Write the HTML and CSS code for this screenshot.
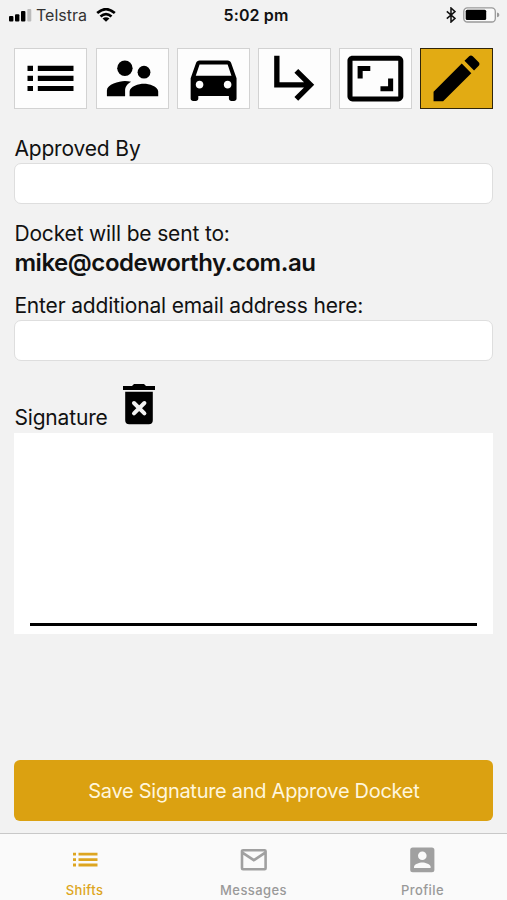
FILE: index.html
```html
<!DOCTYPE html>
<html lang="en">
<head>
<meta charset="utf-8">
<title>Docket approval</title>
<link rel="stylesheet" href="styles.css">
</head>
<body>
<div class="screen">
  <header class="status">
    <div class="status-left">
      <svg class="signal" width="23" height="14" viewBox="0 0 23 14"><rect x="0" y="8" width="4.4" height="5.5" rx="1"/><rect x="6" y="6.3" width="4.4" height="7.2" rx="1"/><rect x="12" y="3" width="4.4" height="10.5" rx="1"/><rect class="faint" x="18.3" y="1" width="4" height="12.5" rx="1"/></svg>
      <span class="carrier">Telstra</span>
      <svg class="wifi" width="20" height="14" viewBox="0 0 20 14"><path d="M1.2 5.1Q10-2.7 18.8 5.1M4.5 8.5Q10 3.8 15.5 8.5"/><path class="dot" d="M6.5 10.6Q10 7.8 13.5 10.6L10 13.8z"/></svg>
    </div>
    <div class="clock">5:02 pm</div>
    <div class="status-right">
      <svg width="10" height="16" viewBox="0 0 10 16"><path class="bluetooth" d="M.8 4.4 9 11.4 5 15V1l4 3.6-8.2 7"/></svg>
      <svg width="37" height="16" viewBox="0 0 37 16"><rect class="cell" x=".8" y=".8" width="31.5" height="14.2" rx="3.6"/><rect x="2.7" y="2.8" width="20.5" height="10.3" rx="1.5"/><path class="cap" d="M34 5.6q2.4.3 2.4 2.4T34 10.3z"/></svg>
    </div>
  </header>

  <main class="content">
    <nav class="tools">
      <a class="tool"><svg viewBox="14.5 48 73 61"><path d="M28 65.7h5.5v5.2H28zM38.3 65.7H74v5.2H38.3zM28 75.7h5.5v5.2H28zM38.3 75.7H74v5.2H38.3zM28 85.9h5.5v5.2H28zM38.3 85.9H74v5.2H38.3z"/></svg></a>
      <a class="tool"><svg viewBox="95.7 48 73 61"><circle cx="124.6" cy="68.2" r="7.7"/><circle cx="143.7" cy="72.2" r="6.4"/><path d="M106.6 96.3v-5.8c0-6 12-9.5 18-9.5q3 0 6.2.8c-4.5 2.6-6 5.5-6 9v5.5zM129.3 96.3v-4.8c0-5.2 9.3-7.8 14.3-7.8s14.3 2.6 14.3 7.8v4.8z"/></svg></a>
      <a class="tool"><svg viewBox="176.9 48 73 61"><path transform="translate(182.9 50.5) scale(2.55 2.53)" d="M18.92 5.01C18.72 4.42 18.16 4 17.5 4h-11c-.66 0-1.21.42-1.42 1.01L3 11v8c0 .55.45 1 1 1h1c.55 0 1-.45 1-1v-1h12v1c0 .55.45 1 1 1h1c.55 0 1-.45 1-1v-8l-2.08-5.99zM6.5 15c-.83 0-1.5-.67-1.5-1.5S5.67 12 6.5 12s1.5.67 1.5 1.5S7.33 15 6.5 15zm11 0c-.83 0-1.5-.67-1.5-1.5s.67-1.5 1.5-1.5 1.5.67 1.5 1.5-.67 1.5-1.5 1.5zM5 10l1.5-4.5h11L19 10H5z"/></svg></a>
      <a class="tool"><svg viewBox="258.1 48 73 61"><path transform="translate(263.6 45.1) scale(2.67 2.65)" d="M19 15l-6 6-1.42-1.42L15.17 16H4V4h2v10h9.17l-3.59-3.58L13 9l6 6z"/></svg></a>
      <a class="tool"><svg viewBox="339.3 48 73 61"><path transform="translate(345.2 48.1) scale(2.54)" d="M19 12h-2v3h-3v2h5v-5zM7 9h3V7H5v5h2V9zm14-6H3c-1.1 0-2 .9-2 2v14c0 1.1.9 2 2 2h18c1.1 0 2-.9 2-2V5c0-1.1-.9-2-2-2zm0 16.01H3V4.99h18v14.02z"/></svg></a>
      <a class="tool active"><svg viewBox="420.5 48 73 61"><path transform="translate(426.4 47.8) scale(2.55)" d="M3 17.25V21h3.75L17.81 9.94l-3.75-3.75L3 17.25zM20.71 7.04c.39-.39.39-1.02 0-1.41l-2.34-2.34c-.39-.39-1.02-.39-1.41 0l-1.83 1.83 3.75 3.75 1.83-1.83z"/></svg></a>
    </nav>

    <label class="label approved" for="approver"><span>Approved By</span></label>
    <input class="field" id="approver" type="text">
    <p class="label sent"><span>Docket will be sent to:</span></p>
    <p class="email"><span>mike@codeworthy.com.au</span></p>
    <label class="label extra" for="extra"><span>Enter additional email address here:</span></label>
    <input class="field" id="extra" type="text">

    <div class="signature-head">
      <span class="label signature">Signature</span>
      <svg class="trash" width="34" height="42" viewBox="0 0 34 42"><path d="M1 3h9l2-2h10l2 2h9v4H1zM3.2 8.8h27.6v28.4a4 4 0 0 1-4 4H7.2a4 4 0 0 1-4-4z"/><path class="cross" d="m12 20 10.4 10.4m0-10.4L12 30.4"/></svg>
    </div>
    <div class="pad"><div class="pad-line"></div></div>
    <button class="save"><span>Save Signature and Approve Docket</span></button>
  </main>

  <nav class="tabs">
    <a class="tab current"><svg width="28" height="28" viewBox="0 0 28 28"><path d="M2 6.8h3v2.8H2zM7.5 6.8h19v2.8h-19zM2 12.2h3V15H2zM7.5 12.2h19V15h-19zM2 17.6h3v2.8H2zM7.5 17.6h19v2.8h-19z"/></svg><span>Shifts</span></a>
    <a class="tab messages"><svg width="28" height="28" viewBox="0 0 28 28"><path class="line" d="M3 4.2h21.6a1 1 0 0 1 1 1v17a1 1 0 0 1-1 1H3a1 1 0 0 1-1-1v-17a1 1 0 0 1 1-1zM2 6.3l11.8 7.9 11.8-7.9"/></svg><span>Messages</span></a>
    <a class="tab profile"><svg width="28" height="28" viewBox="0 0 28 28"><rect x="1.2" y="1.6" width="24.2" height="24.6" rx="2.5"/><circle class="hole" cx="13.3" cy="9.8" r="4.3"/><path class="hole" d="M5 22v-1.2c0-2.8 5.4-4.4 8.3-4.4s8.3 1.6 8.3 4.4V22z"/></svg><span>Profile</span></a>
  </nav>
</div>
</body>
</html>
```

FILE: styles.css
```css
* { box-sizing: border-box; }
body {
  margin: 0;
  background: #f2f2f2;
  color: #111;
  font-family: Inter, "Liberation Sans", sans-serif;
}
p { margin: 0; }
svg { display: block; flex: none; }
.screen { display: flex; flex-direction: column; width: 507px; height: 900px; overflow: hidden; }

.status {
  display: grid;
  grid-template-columns: 1fr auto 1fr;
  align-items: center;
  height: 30px;
  padding: 0 7px 0 9px;
}
.status-left, .status-right { display: flex; align-items: center; }
.status-right { justify-content: flex-end; gap: 7px; }
.carrier { margin: 0 9px 0 4px; font-size: 16px; letter-spacing: 0; color: #333; }
.faint { fill: #bbb; }
.wifi { fill: none; stroke: #000; stroke-width: 2.7; }
.dot { fill: #000; stroke: none; }
.clock { padding-left: 3px; font-size: 16px; font-weight: 600; letter-spacing: 0.1px; }
.bluetooth { fill: none; stroke: #111; stroke-width: 1.5; }
.cell { fill: #fafafa; stroke: #999; stroke-width: 1.3; }
.cap { fill: #999; }

.content { display: flex; flex-direction: column; flex: 1; padding: 18px 13.6px 12px 14.4px; }
.tools { display: flex; justify-content: space-between; height: 61px; }
.tool { width: 73px; height: 61px; background: #fdfdfd; border: 1px solid #d2d2d2; }
.tool svg { width: 73px; height: 61px; margin: -1px; }
.tool.active { background: #e2ab13; border-color: #30250a; }

.label { display: block; font-size: 21px; line-height: 30px; letter-spacing: -0.16px; white-space: nowrap; }
.approved { padding-top: 25px; line-height: 29px; }
.field {
  width: 100%;
  height: 41px;
  padding: 0 10px;
  background: #fff;
  border: 1px solid #dedede;
  border-radius: 7px;
  font: inherit;
}
.sent { margin-top: 15px; line-height: 29px; }
.email { font-size: 24px; font-weight: 600; line-height: 29px; letter-spacing: -0.44px; }
.extra { padding-top: 14px; line-height: 29px; }
.signature-head { display: flex; align-items: flex-end; height: 72px; }
.trash { margin: 0 0 8px 14px; }
.cross { fill: none; stroke: #f2f2f2; stroke-width: 4; stroke-linecap: round; }
.pad {
  display: flex;
  align-items: flex-end;
  height: 201px;
  padding: 0 16px 8px;
  background: #fff;
}
.pad-line { flex: 1; height: 2.5px; background: #000; border-bottom: 0.5px solid #000; min-height: 3px; }
.save {
  height: 61px;
  margin-top: auto;
  padding: 0;
  background: #dba111;
  border: 0;
  border-radius: 6px;
  color: #fff6dc;
  font: 20px Inter, "Liberation Sans", sans-serif;
  letter-spacing: -0.28px;
}

.tabs { display: grid; grid-template-columns: repeat(3, 1fr); height: 67px; background: #fafafa; border-top: 1px solid #c8c8c8; }
.tab {
  display: flex;
  flex-direction: column;
  align-items: center;
  padding-top: 12px;
  fill: #a0a0a0;
  color: #999;
  font-size: 13px;
  font-weight: 500;
  line-height: 18px;
  letter-spacing: 0.4px;
}
.tab span { margin-top: 7px; }
.current { fill: #dda520; color: #dda520; }
.line { fill: none; stroke: #a0a0a0; stroke-width: 2.6; }
.hole { fill: #fafafa; }
```
